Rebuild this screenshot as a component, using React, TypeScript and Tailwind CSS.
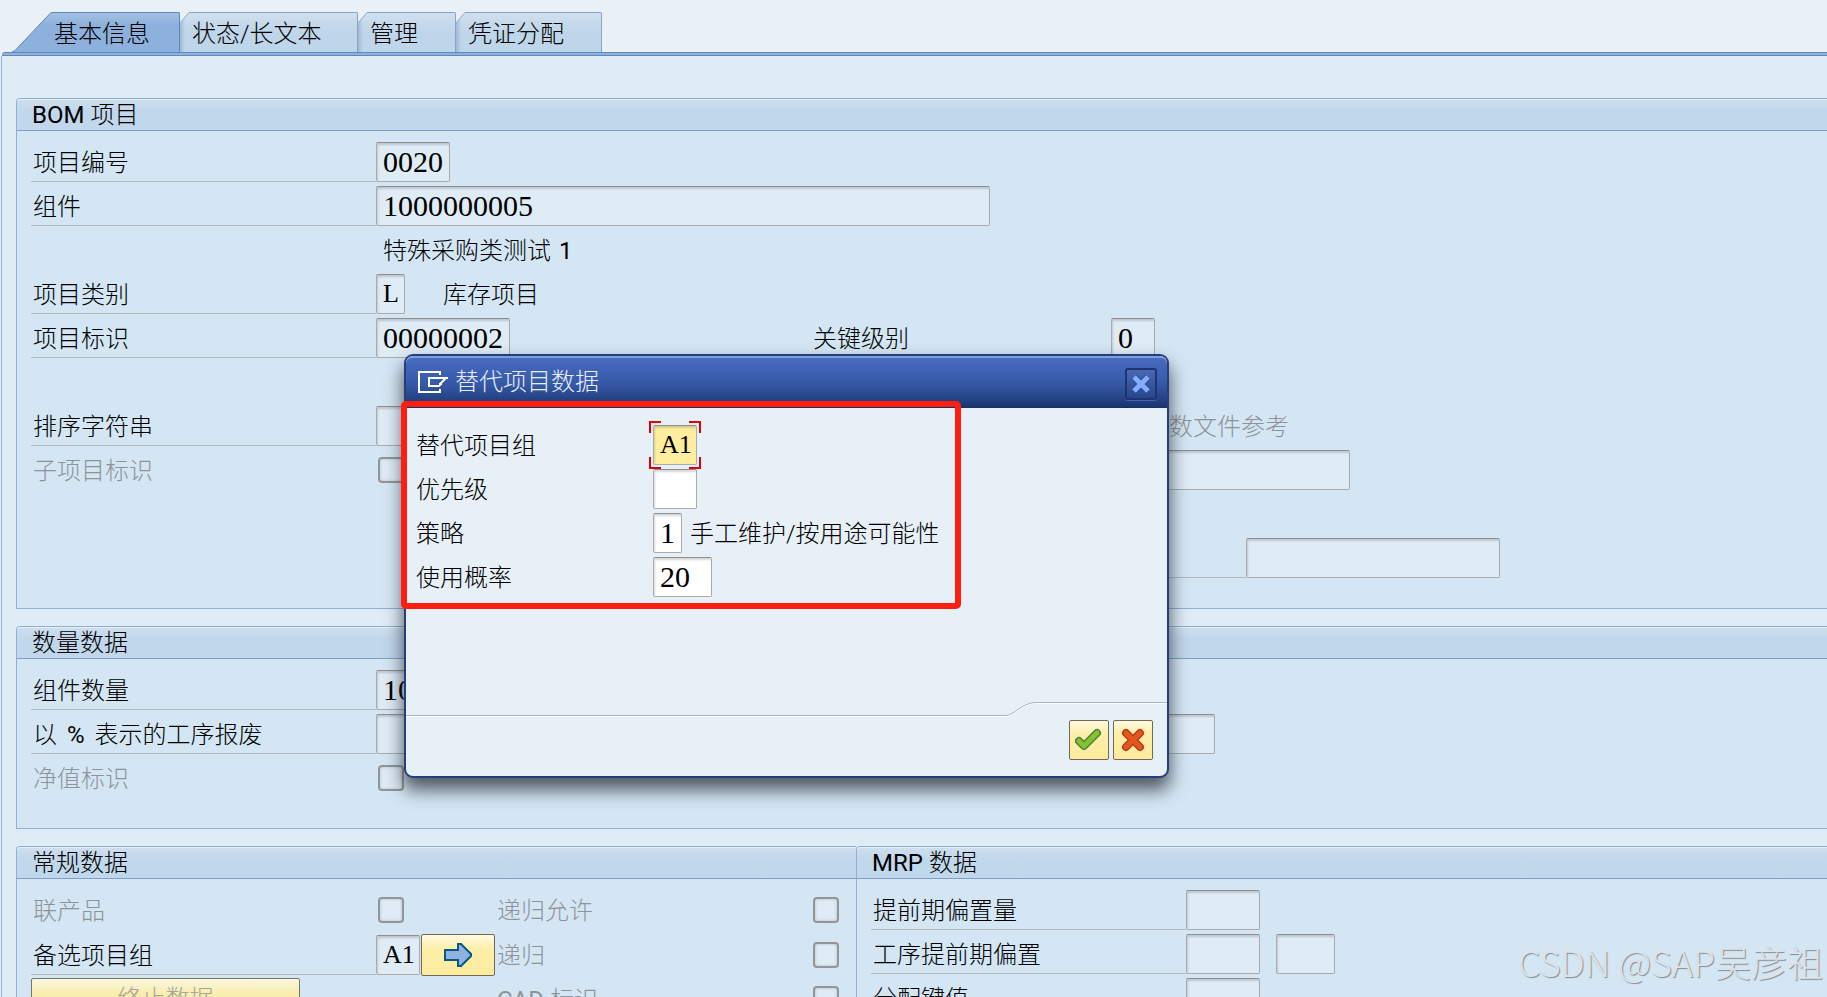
import type { ReactNode } from "react"
import clsx from "clsx"

const FIELD =
  "block h-10 rounded-[2px] border border-[#ababab] border-t-[#8f8f8f] pl-[6px] text-black outline-none shadow-[inset_1px_2px_2px_rgba(90,100,110,0.25)] font-['Liberation_Serif','Noto_Sans_CJK_SC',serif]"

function Field({ id, value = "", label, className }: { id: string; value?: string; label?: string; className?: string }) {
  return <input id={id} aria-label={label} readOnly defaultValue={value} className={clsx(FIELD, "bg-[#dfebf5]", className)} />
}

function Label({ id, children, className }: { id: string; children: ReactNode; className?: string }) {
  return (
    <label htmlFor={id} className={clsx("flex h-10 items-center border-b border-[#b3b8bc] pt-[2px] pl-[2px] whitespace-nowrap", className)}>
      {children}
    </label>
  )
}

function DisabledLabel({ id, children, className }: { id: string; children: ReactNode; className?: string }) {
  return (
    <label htmlFor={id} className={clsx("flex h-10 items-center pt-[2px] whitespace-nowrap text-[#8e9399]", className)}>
      {children}
    </label>
  )
}

function Latin({ children }: { children: ReactNode }) {
  return <span className="font-normal">{children}</span>
}

function Check({ id }: { id: string }) {
  return (
    <input
      id={id}
      type="checkbox"
      disabled
      className="m-[2px] block size-[26px] shrink-0 appearance-none rounded-[4px] border-2 border-[#929699] bg-[#dfebf5] shadow-[inset_0_0_3px_rgba(90,100,130,0.35)]"
    />
  )
}

function Group({ title, children, className }: { title: ReactNode; children: ReactNode; className?: string }) {
  return (
    <section className={clsx("rounded-tl-[4px] border border-r-0 border-[#8eb0d6] bg-[#d4e6f4]", className)}>
      <h2 className="flex h-8 items-center gap-[6px] rounded-tl-[3px] border-b border-[#7f9fc9] bg-linear-to-b from-[#cfdfee] to-[#c1d7eb] to-40% pl-[15px] shadow-[inset_0_1px_0_#e4eff8]">
        {title}
      </h2>
      <div className="flex flex-col gap-1 pt-[11px] pl-[14px]">{children}</div>
    </section>
  )
}

function Row({ children, className }: { children?: ReactNode; className?: string }) {
  return <div className={clsx("grid h-10 items-center", className)}>{children}</div>
}

const WIDE = "grid-cols-[345px_435px_1fr]"
const GENERAL = "grid-cols-[345px_121px_1fr_45px]"
const MRP = "grid-cols-[315px_1fr]"

function Tab({ children, active, className }: { children: ReactNode; active?: boolean; className?: string }) {
  return (
    <button type="button" role="tab" aria-selected={!!active} className={clsx("flex h-10", className)}>
      {active ? (
        <svg width="40" height="40" viewBox="0 0 40 40" className="shrink-0">
          <defs>
            <linearGradient id="tab-on" x1="0" y1="0" x2="0" y2="1">
              <stop offset="0" stopColor="#a3c1e2" />
              <stop offset="0.3" stopColor="#8db1dc" />
            </linearGradient>
          </defs>
          <path d="M0 40 L3 38.5 L38 1.5 L40 0.5 V40 Z" fill="url(#tab-on)" />
          <path d="M0 40 L3 38.5 L38 1.5 L40 0.5" fill="none" stroke="#5f88b8" />
        </svg>
      ) : (
        <svg width="10" height="40" viewBox="0 0 10 40" className="shrink-0">
          <defs>
            <linearGradient id="tab-off" x1="0" y1="0" x2="0" y2="1">
              <stop offset="0" stopColor="#cfe0ef" />
              <stop offset="0.5" stopColor="#bfd5e9" />
            </linearGradient>
            <linearGradient id="tab-edge" x1="0" y1="0" x2="1" y2="0">
              <stop offset="0" stopColor="#7f9ab8" stopOpacity="0.5" />
              <stop offset="0.5" stopColor="#7f9ab8" stopOpacity="0" />
            </linearGradient>
          </defs>
          <path d="M0 11 L9 0.5 H10 V40 H0 Z" fill="url(#tab-off)" />
          <path d="M0 11 L9 0.5 H10 V40 H0 Z" fill="url(#tab-edge)" />
          <path d="M0 11 L9 0.5 H10" fill="none" stroke="#8eabcb" />
        </svg>
      )}
      <span
        className={clsx(
          "flex h-10 flex-1 items-center rounded-tr-[2px] border-t border-r bg-linear-to-b pt-[2px] pl-[2px] whitespace-nowrap",
          active
            ? "border-[#5f88b8] from-[#a3c1e2] from-0% to-[#8db1dc] to-30%"
            : "border-[#86a4c7] from-[#cfe0ef] from-0% to-[#bfd5e9] to-50%",
        )}
      >
        {children}
      </span>
    </button>
  )
}

const YELLOW =
  "flex items-center justify-center rounded-[2px] border border-[#6f6a58] bg-linear-to-b from-[#fff9df] from-0% via-[#feeea8] via-35% to-[#fdec9e]"

function Dialog() {
  const row = "grid h-10 grid-cols-[237px_1fr] items-center"
  const input = clsx(FIELD, "bg-white")
  return (
    <div
      role="dialog"
      aria-labelledby="dialog-title"
      className="absolute top-[354px] left-[404px] w-[765px] rounded-[9px] border-2 border-[#263f7b] bg-[#e8f0f7] shadow-[0_11px_18px_1px_rgba(35,42,50,0.75)]"
    >
      <header className="flex h-[52px] items-center rounded-t-[7px] border-t-2 border-b border-t-[#7c9fdd] border-b-[#1b2f62] bg-linear-to-b from-[#486bc0] via-[#3558a5] via-55% to-[#1b3571] pr-[10px] pb-px pl-3 text-[#e6edfa]">
        <svg width="30" height="24" viewBox="0 0 30 24" fill="none" stroke="#fff" strokeWidth="2">
          <path d="M22 5 V2 H1 V22 H22 V19" />
          <path d="M30 8 H11 V16 H21 L22 15 V14 H23 V13 L28 8" />
        </svg>
        <h1 id="dialog-title" className="flex-1 pl-[7px]">
          替代项目数据
        </h1>
        <button
          type="button"
          aria-label="关闭"
          className="mt-1 flex size-8 items-center justify-center rounded-[3px] border-2 border-[#1c3470] bg-linear-to-b from-[#4a69b2] to-[#27458c] shadow-[0_1px_0_#4566b0]"
        >
          <svg width="22" height="22" viewBox="0 0 22 22" fill="none">
            <path d="M4 4 L18 18 M18 4 L4 18" stroke="#2c4a92" strokeWidth="7" />
            <path d="M4 4 L18 18 M18 4 L4 18" stroke="#86acff" strokeWidth="5" />
          </svg>
        </button>
      </header>

      <div className="flex flex-col gap-1 pt-[17px] pl-[10px]">
        <div className={row}>
          <label htmlFor="alt-group" className="pt-[2px]">
            替代项目组
          </label>
          <div className="relative w-11">
            <input id="alt-group" defaultValue="A1" className={clsx(FIELD, "w-11 bg-[#feee9e] text-[26px]")} />
            <span className="absolute -top-1 -left-1 size-3 border-t-2 border-l-2 border-[#e00009]" />
            <span className="absolute -top-1 -right-1 size-3 border-t-2 border-r-2 border-[#e00009]" />
            <span className="absolute -bottom-1 -left-1 size-3 border-b-2 border-l-2 border-[#e00009]" />
            <span className="absolute -right-1 -bottom-1 size-3 border-r-2 border-b-2 border-[#e00009]" />
          </div>
        </div>
        <div className={row}>
          <label htmlFor="priority" className="pt-[2px]">
            优先级
          </label>
          <input id="priority" className={clsx(input, "w-11 text-[30px]")} />
        </div>
        <div className={row}>
          <label htmlFor="strategy" className="pt-[2px]">
            策略
          </label>
          <div className="flex items-center gap-2">
            <input id="strategy" defaultValue="1" className={clsx(input, "w-[29px] text-[30px]")} />
            <span className="pt-[2px]">手工维护/按用途可能性</span>
          </div>
        </div>
        <div className={row}>
          <label htmlFor="usage" className="pt-[2px]">
            使用概率
          </label>
          <input id="usage" defaultValue="20" className={clsx(input, "w-[59px] text-[30px]")} />
        </div>
      </div>

      <footer className="pt-[105px]">
        <div className="flex h-[15px]">
          <div className="mt-[13px] h-[2px] flex-1 border-t border-b border-t-[#a9b5cb] border-b-white" />
          <svg width="30" height="15" viewBox="0 0 30 15" fill="none">
            <path d="M0 14.500 C8 14.500 16 1.500 30 1.500" stroke="#fff" />
            <path d="M0 13.500 C8 13.500 16 0.500 30 0.500" stroke="#a9b5cb" />
          </svg>
          <div className="h-[2px] w-[131px] border-t border-b border-t-[#a9b5cb] border-b-white" />
        </div>
        <div className="flex justify-end gap-1 pt-[3px] pr-[14px] pb-4">
          <button type="button" aria-label="确认" className={clsx(YELLOW, "size-10")}>
            <svg width="28" height="26" viewBox="0 0 28 26" fill="none" strokeLinecap="round" strokeLinejoin="round">
              <path d="M4 14 L9 19 L22 6" stroke="#4d7f4a" strokeWidth="8" />
              <path d="M4 14 L9 19 L22 6" stroke="#86c22a" strokeWidth="5" />
            </svg>
          </button>
          <button type="button" aria-label="取消" className={clsx(YELLOW, "size-10")}>
            <svg width="26" height="26" viewBox="0 0 26 26" fill="none" strokeLinecap="round">
              <path d="M6 6 L20 20 M20 6 L6 20" stroke="#b93e1c" strokeWidth="8" />
              <path d="M6 6 L20 20 M20 6 L6 20" stroke="#e0581a" strokeWidth="5" />
            </svg>
          </button>
        </div>
      </footer>
    </div>
  )
}

export default function App() {
  return (
    <div className="relative flex h-screen flex-col overflow-hidden bg-[#e9f1f7] pt-3 font-['Roboto','Noto_Sans_CJK_SC',sans-serif] text-2xl font-light text-black">
      <nav role="tablist" className="flex shrink-0 pl-[12px]">
        <Tab active className="w-[168px]">
          基本信息
        </Tab>
        <Tab className="w-[178px]">状态/长文本</Tab>
        <Tab className="w-[98px]">管理</Tab>
        <Tab className="w-[146px]">凭证分配</Tab>
      </nav>
      <div className="ml-[2px] h-1 shrink-0 rounded-tl-[3px] border-y border-[#5f88b8] bg-[#8fb3de]" />

      <main className="ml-[1px] flex flex-1 flex-col gap-[17px] border-l border-[#8eb0d6] bg-[#dfebf5] pt-[42px] pl-[14px]">
        <Group
          title={
            <>
              <Latin>BOM</Latin> 项目
            </>
          }
          className="pb-[30px]"
        >
          <Row className={WIDE}>
            <Label id="item-no">项目编号</Label>
            <Field id="item-no" value="0020" className="w-[74px] text-[30px]" />
          </Row>
          <Row className="grid-cols-[345px_614px]">
            <Label id="component">组件</Label>
            <Field id="component" value="1000000005" className="w-full text-[30px]" />
          </Row>
          <Row className={WIDE}>
            <span className="col-start-2 flex gap-2 pt-[2px] pl-[7px]">
              特殊采购类测试 <Latin>1</Latin>
            </span>
          </Row>
          <Row className={WIDE}>
            <Label id="category">项目类别</Label>
            <div className="flex items-center gap-[38px]">
              <Field id="category" value="L" className="w-[29px] text-[26px]" />
              <span className="pt-[2px]">库存项目</span>
            </div>
          </Row>
          <Row className={WIDE}>
            <Label id="item-id">项目标识</Label>
            <Field id="item-id" value="00000002" className="w-[134px] text-[30px]" />
            <div className="flex">
              <Label id="level" className="w-[300px]">
                关键级别
              </Label>
              <Field id="level" value="0" className="w-11 text-[30px]" />
            </div>
          </Row>
          <Row />
          <Row className={WIDE}>
            <Label id="sort">排序字符串</Label>
            <Field id="sort" className="w-[164px]" />
            <span className="pt-[2px] pl-[334px] text-[#8e9399]">参数文件参考</span>
          </Row>
          <Row className={WIDE}>
            <DisabledLabel id="sub-item" className="pl-[2px]">
              子项目标识
            </DisabledLabel>
            <Check id="sub-item" />
            <Field id="file-ref" label="参数文件参考" className="ml-[285px] w-[254px]" />
          </Row>
          <Row />
          <Row className={WIDE}>
            <div className="col-start-3 flex">
              <div className="w-[435px] border-b border-[#b3b8bc]" />
              <Field id="extra" label="参考" className="w-[254px]" />
            </div>
          </Row>
        </Group>

        <Group title="数量数据" className="pb-[30px]">
          <Row className={WIDE}>
            <Label id="quantity">组件数量</Label>
            <Field id="quantity" value="10" className="w-[254px] text-[30px]" />
          </Row>
          <Row className={WIDE}>
            <Label id="op-scrap" className="gap-[10px]">
              以 <Latin>%</Latin> 表示的工序报废
            </Label>
            <Field id="op-scrap" className="w-[104px]" />
            <Field id="comp-scrap" label="部件报废" className="ml-[300px] w-[104px]" />
          </Row>
          <Row className={WIDE}>
            <DisabledLabel id="net" className="pl-[2px]">
              净值标识
            </DisabledLabel>
            <Check id="net" />
          </Row>
        </Group>

        <div className="flex">
          <Group title="常规数据" className="w-[840px]">
            <Row className={GENERAL}>
              <DisabledLabel id="co-product" className="pl-[2px]">
                联产品
              </DisabledLabel>
              <Check id="co-product" />
              <DisabledLabel id="rec-allowed">递归允许</DisabledLabel>
              <Check id="rec-allowed" />
            </Row>
            <Row className={GENERAL}>
              <Label id="alt-items">备选项目组</Label>
              <div className="flex items-center gap-px">
                <Field id="alt-items" value="A1" className="w-11 text-[26px]" />
                <button type="button" aria-label="替代项目数据" className={clsx(YELLOW, "h-[42px] w-[74px] shrink-0")}>
                  <svg width="30" height="26" viewBox="0 0 30 26">
                    <path d="M2 8 H15 V2 H18 L28 12 V14 L18 24 H15 V18 H2 Z" fill="#8fb3de" stroke="#075985" strokeWidth="2" />
                  </svg>
                </button>
              </div>
              <DisabledLabel id="recursive">递归</DisabledLabel>
              <Check id="recursive" />
            </Row>
            <Row className={GENERAL}>
              <button type="button" disabled className={clsx(YELLOW, "h-[42px] w-[269px] text-[#a0a094] opacity-90")}>
                终止数据
              </button>
              <DisabledLabel id="cad" className="col-start-3 gap-[6px]">
                <Latin>CAD</Latin> 标识
              </DisabledLabel>
              <Check id="cad" />
            </Row>
          </Group>

          <Group
            title={
              <>
                <Latin>MRP</Latin> 数据
              </>
            }
            className="flex-1"
          >
            <Row className={MRP}>
              <Label id="lead">提前期偏置量</Label>
              <Field id="lead" className="w-[74px]" />
            </Row>
            <Row className={MRP}>
              <Label id="op-lead">工序提前期偏置</Label>
              <div className="flex gap-4">
                <Field id="op-lead" className="w-[74px]" />
                <Field id="op-lead-unit" label="单位" className="w-[59px]" />
              </div>
            </Row>
            <Row className={MRP}>
              <Label id="dist-key">分配键值</Label>
              <Field id="dist-key" className="w-[74px]" />
            </Row>
          </Group>
        </div>
      </main>

      <Dialog />
      <div className="pointer-events-none absolute top-[401px] left-[401px] h-[208px] w-[560px] rounded-[5px] border-6 border-[#ff1e10]" />
      <div className="pointer-events-none absolute right-1 bottom-4 font-['Noto_Sans_CJK_SC',sans-serif] text-4xl text-[#dfe3e8] [text-shadow:1px_1px_1px_#7f8a96]">
        CSDN @SAP吴彦祖
      </div>
    </div>
  )
}
